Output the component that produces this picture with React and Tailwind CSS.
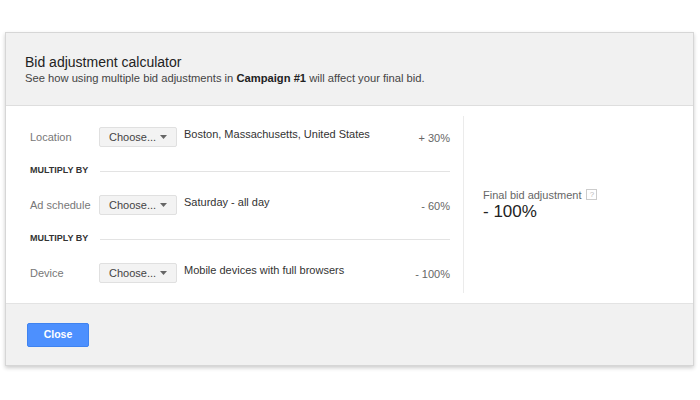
import React from 'react';

const rows = [
  { label: 'Location', value: 'Boston, Massachusetts, United States', pct: '+ 30%' },
  { label: 'Ad schedule', value: 'Saturday - all day', pct: '- 60%' },
  { label: 'Device', value: 'Mobile devices with full browsers', pct: '- 100%' },
];

const ChooseButton = () => (
  <div className="w-[78px] h-[20px] flex items-center justify-between pl-[9px] pr-[9px] bg-[#f3f3f3] border border-[#e0e0e0] rounded-[2px] text-[11px] text-[#444]">
    <span>Choose...</span>
    <svg width="7" height="4" viewBox="0 0 7 4">
      <path d="M0 0h7L3.5 4z" fill="#666" />
    </svg>
  </div>
);

const App = () => {
  return (
    <div className="w-[700px] h-[400px] bg-white pt-[32px] pl-[5px] font-['Liberation_Sans',Arial,sans-serif]">
      <div className="w-[689px] border border-[#d6d6d6] shadow-[0_2px_4px_rgba(0,0,0,0.2)]">
        {/* Header */}
        <div className="bg-[#f1f1f1] border-b border-[#dedede] pl-[19px] pt-[20px] pb-[20px]">
          <div className="text-[14px] leading-[18px] text-[#222]">Bid adjustment calculator</div>
          <div className="text-[11.2px] leading-[14px] text-[#444]">
            See how using multiple bid adjustments in <span className="font-bold text-[#222]">Campaign #1</span> will affect your final bid.
          </div>
        </div>

        {/* Body */}
        <div className="flex bg-white">
          <div className="w-[457px] pl-[24px] pr-[13px] pt-[21px] pb-[20px]">
            {rows.map((r, i) => (
              <React.Fragment key={r.label}>
                {i > 0 && (
                  <div className="h-[48px] flex items-center">
                    <span className="w-[70px] text-[9px] font-bold text-[#333]">MULTIPLY BY</span>
                    <div className="flex-1 h-px bg-[#e3e3e3]"></div>
                  </div>
                )}
                <div className="h-[20px] flex items-start">
                  <span className="w-[69px] pt-[3px] text-[11px] leading-[14px] text-[#777]">{r.label}</span>
                  <ChooseButton />
                  <span className="ml-[7px] flex-1 text-[11px] leading-[14px] text-[#333]">{r.value}</span>
                  <span className="pt-[4px] text-[11px] leading-[14px] text-[#666]">{r.pct}</span>
                </div>
              </React.Fragment>
            ))}
          </div>
          <div className="flex-1 my-[10px] border-l border-[#ebebeb] flex items-center pl-[19px]">
            <div>
              <div className="flex items-center gap-[5px] text-[11px] leading-[14px] text-[#666]">
                Final bid adjustment
                <span className="w-[11px] h-[11px] border border-[#ccc] text-[8px] leading-[9px] text-[#bbb] flex items-center justify-center">?</span>
              </div>
              <div className="text-[17px] leading-[20px] text-[#222]">- 100%</div>
            </div>
          </div>
        </div>

        {/* Footer */}
        <div className="bg-[#f1f1f1] border-t border-[#e3e3e3] h-[62px] flex items-center pl-[21px]">
          <button className="w-[62px] h-[24px] bg-[#4d90fe] border border-[#3f83f0] rounded-[2px] text-white text-[10.5px] font-bold">
            Close
          </button>
        </div>
      </div>
    </div>
  );
};

export default App;
